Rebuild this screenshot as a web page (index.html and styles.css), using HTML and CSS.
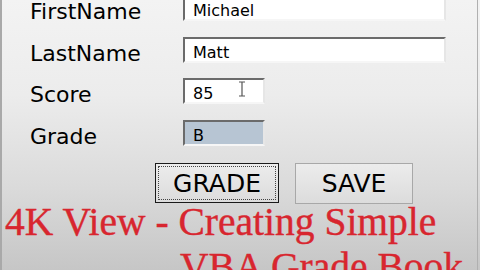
FILE: index.html
```html
<!DOCTYPE html>
<html>
<head>
<meta charset="utf-8">
<link rel="stylesheet" href="styles.css">
</head>
<body>
<div class="window">
  <div class="form">
    <div class="label">FirstName</div>
    <div class="field wide">Michael</div>
    <div class="label">LastName</div>
    <div class="field wide">Matt</div>
    <div class="label">Score</div>
    <div class="field short">85
      <svg class="ibeam" width="8" height="16" viewBox="0 0 8 16"><path d="M1 1h6M4 1v14M1 15h6" stroke="#555" stroke-width="1.2" fill="none"/></svg>
    </div>
    <div class="label">Grade</div>
    <div class="field short grade">B</div>
  </div>
  <div class="buttons">
    <div class="btn default"><span class="focus">GRADE</span></div>
    <div class="btn">SAVE</div>
  </div>
  <div class="title">
    <div class="line1">4K View - Creating Simple</div>
    <div class="line2">VBA Grade Book</div>
  </div>
</div>
</body>
</html>
```
FILE: styles.css
```css
html, body {
  margin: 0;
  padding: 0;
}
body {
  width: 480px;
  height: 270px;
  overflow: hidden;
  background: linear-gradient(to bottom, #f3f3f3 0%, #ececec 35%, #dadada 70%, #c6c6c6 100%);
  font-family: "DejaVu Sans", sans-serif;
  color: #000;
}
.window {
  height: 270px;
  width: 478px;
  box-sizing: border-box;
  border-left: 2px solid #a9a9a9;
  border-right: 1px solid #b0b0b0;
  overflow: hidden;
}
.form {
  display: grid;
  grid-template-columns: 153px 263px;
  grid-auto-rows: 26px;
  row-gap: 15.5px;
  margin-top: -5px;
  padding-left: 28px;
}
.label {
  font-size: 22px;
  line-height: 26px;
  padding-top: 4px;
  white-space: nowrap;
}
.field {
  position: relative;
  box-sizing: border-box;
  height: 26px;
  border: 2px solid;
  border-color: #6b6b6b #e6e6e6 #f6f6f6 #6b6b6b;
  background: #fff;
  font-size: 16px;
  line-height: 21px;
  padding: 3px 0 0 8px;
}
.short {
  width: 82px;
}
.grade {
  background: #b7c5d3;
}
.ibeam {
  position: absolute;
  left: 53px;
  top: 1px;
}
.buttons {
  display: flex;
  gap: 16px;
  margin-top: 17px;
  padding-left: 153px;
}
.btn {
  box-sizing: border-box;
  width: 118px;
  height: 41px;
  border: 1px solid #a8a8a8;
  background: linear-gradient(to bottom, #ececec, #dcdcdc);
  font-size: 25px;
  line-height: 39px;
  text-align: center;
}
.btn.default {
  width: 124px;
  height: 40px;
  border: 1px solid #1a1a1a;
  padding: 2px;
  line-height: 34px;
}
.focus {
  display: block;
  height: 100%;
  box-sizing: border-box;
  border: 1px dotted #444;
}
.title {
  margin-top: -4px;
  font-family: "Liberation Serif", serif;
  font-size: 39.5px;
  line-height: 45px;
  color: #d8262f;
  -webkit-text-stroke: 0.4px #d8262f;
  white-space: nowrap;
}
.line1 {
  padding-left: 3px;
}
.line2 {
  padding-left: 178px;
}
```
